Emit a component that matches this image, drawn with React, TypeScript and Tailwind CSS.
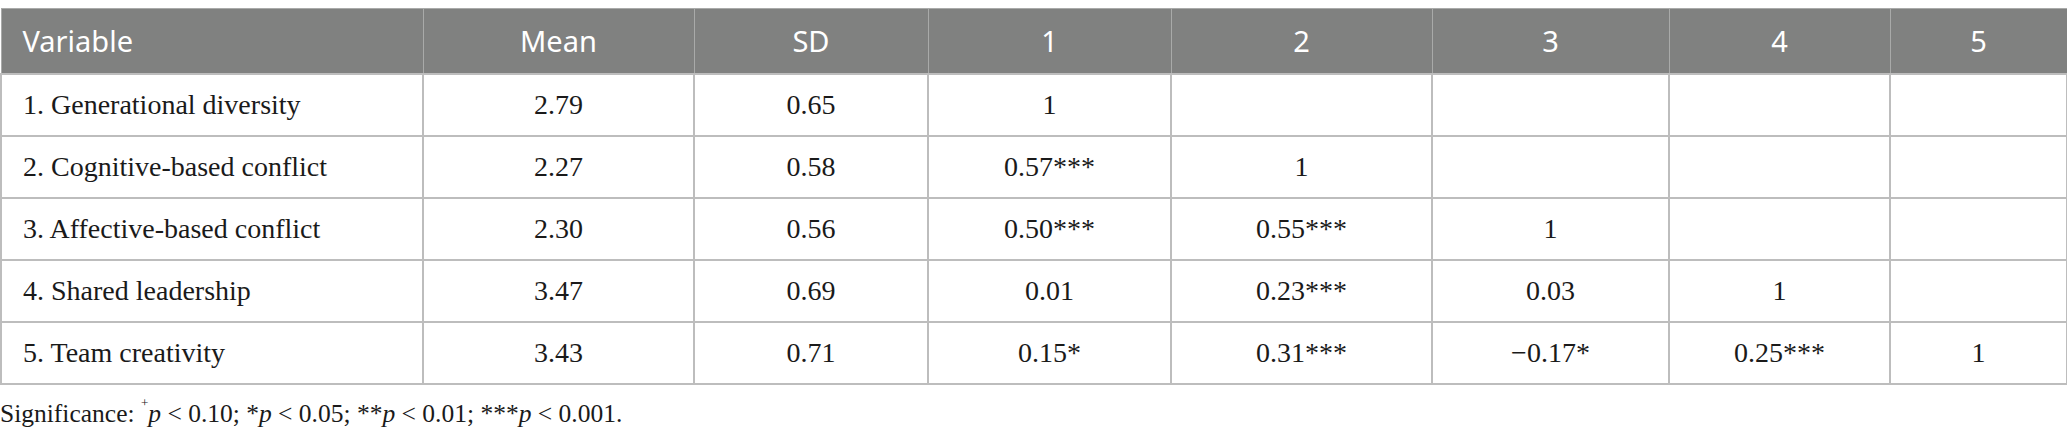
const cols = [422, 271, 234, 243, 261, 237, 221, 177];

const header = ['Variable', 'Mean', 'SD', '1', '2', '3', '4', '5'];

const rows: string[][] = [
  ['1. Generational diversity', '2.79', '0.65', '1', '', '', '', ''],
  ['2. Cognitive-based conflict', '2.27', '0.58', '0.57***', '1', '', '', ''],
  ['3. Affective-based conflict', '2.30', '0.56', '0.50***', '0.55***', '1', '', ''],
  ['4. Shared leadership', '3.47', '0.69', '0.01', '0.23***', '0.03', '1', ''],
  ['5. Team creativity', '3.43', '0.71', '0.15*', '0.31***', '\u22120.17*', '0.25***', '1'],
];

export default function App() {
  return (
    <div className="w-[2067px] h-[443px] bg-white pt-[8px] overflow-hidden">
      <table className="border-collapse table-fixed w-[2066px]">
        <colgroup>
          {cols.map((w, i) => (
            <col key={i} style={{ width: w }} />
          ))}
        </colgroup>
        <thead>
          <tr className="h-[65px] bg-[#808180]">
            {header.map((h, i) => (
              <th
                key={i}
                className={`border border-[#a9aaa9] font-normal text-white text-[29px] font-['Noto_Sans',sans-serif] ${
                  i === 0 ? 'text-left pl-[21px]' : 'text-center'
                }`}
              >
                {h}
              </th>
            ))}
          </tr>
        </thead>
        <tbody>
          {rows.map((r, ri) => (
            <tr key={ri} className="h-[62px]">
              {r.map((c, ci) => (
                <td
                  key={ci}
                  className={`border-2 border-[#bdbdbd] text-[28px] text-[#1a1a1a] font-['Liberation_Serif',serif] ${
                    ci === 0 ? 'text-left pl-[21px]' : 'text-center'
                  }`}
                >
                  {c}
                </td>
              ))}
            </tr>
          ))}
        </tbody>
      </table>
      <p className="mt-[14px] text-[25.5px] leading-[30px] text-[#1a1a1a] font-['Liberation_Serif',serif]">
        Significance: <sup className="text-[13px] align-[8px]">+</sup>
        <i>p</i> &lt; 0.10; *<i>p</i> &lt; 0.05; **<i>p</i> &lt; 0.01; ***<i>p</i> &lt; 0.001.
      </p>
    </div>
  );
}
